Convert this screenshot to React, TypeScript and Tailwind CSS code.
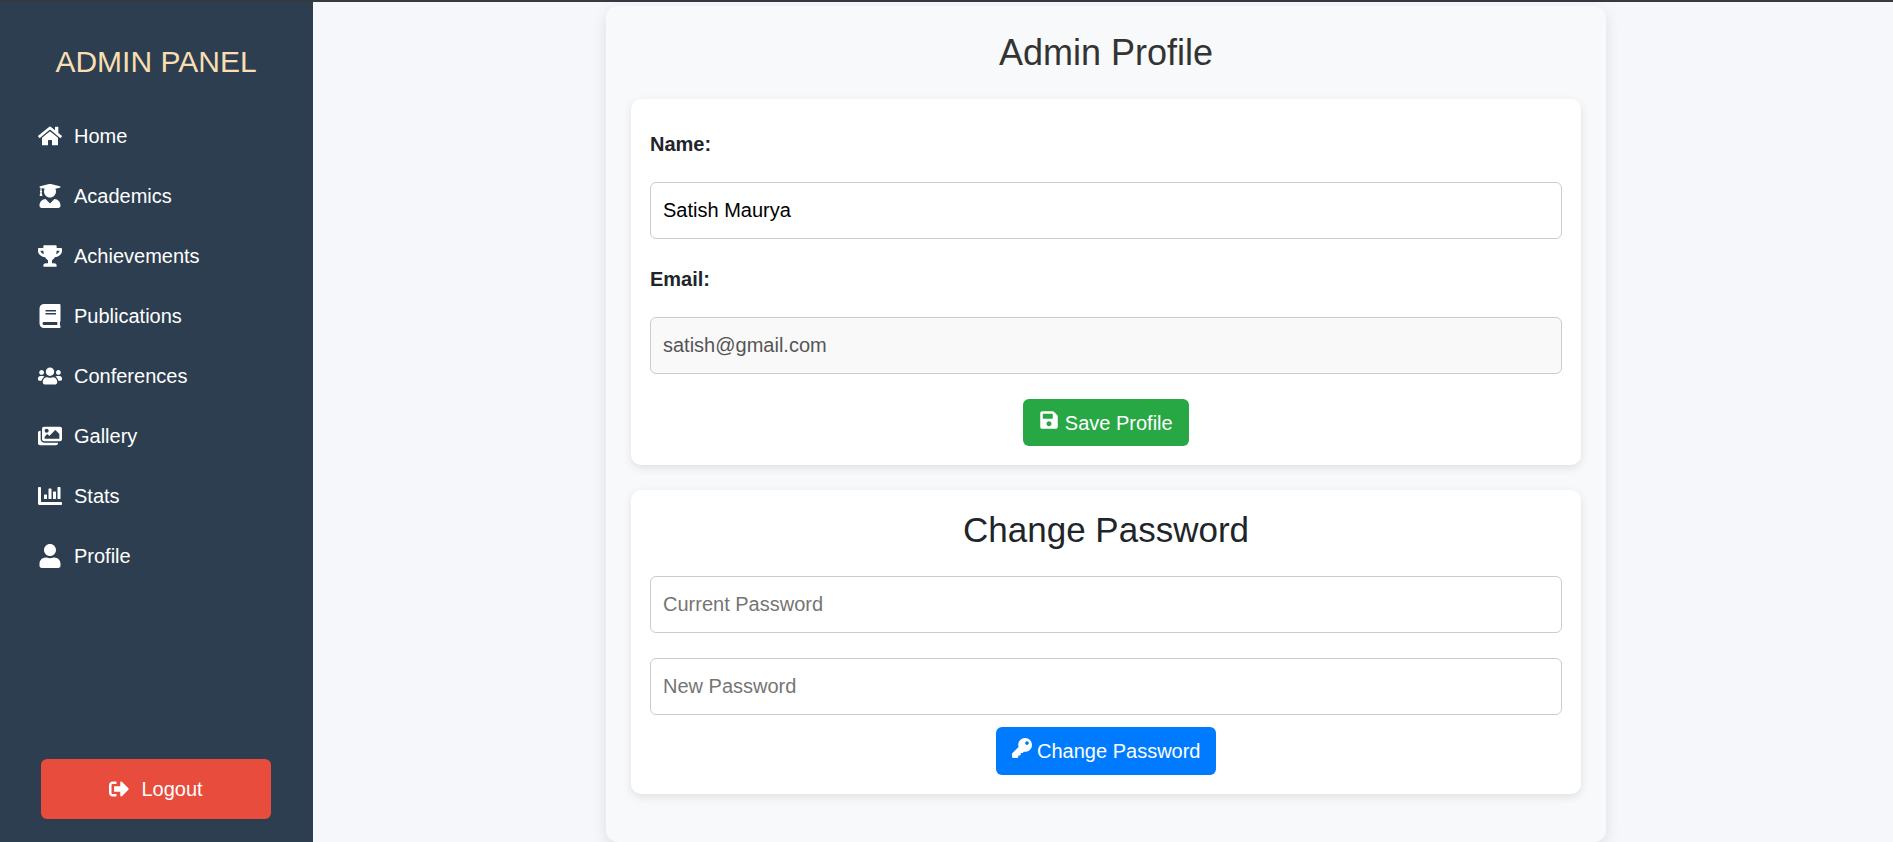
import type { ComponentProps, ReactNode } from "react";
import type { IconType } from "react-icons";
import {
  FaHome,
  FaUserGraduate,
  FaTrophy,
  FaBook,
  FaUsers,
  FaImages,
  FaChartBar,
  FaUser,
  FaSignOutAlt,
  FaSave,
  FaKey,
} from "react-icons/fa";

const links: { label: string; href: string; icon: IconType }[] = [
  { label: "Home", href: "#home", icon: FaHome },
  { label: "Academics", href: "#academics", icon: FaUserGraduate },
  { label: "Achievements", href: "#achievements", icon: FaTrophy },
  { label: "Publications", href: "#publications", icon: FaBook },
  { label: "Conferences", href: "#conferences", icon: FaUsers },
  { label: "Gallery", href: "#gallery", icon: FaImages },
  { label: "Stats", href: "#stats", icon: FaChartBar },
  { label: "Profile", href: "#profile", icon: FaUser },
];

function Sidebar() {
  return (
    <aside className="flex w-[313px] shrink-0 flex-col bg-[#2c3e50] pr-[26px] pl-[25px] pt-[37px] pb-[23px] text-white">
      <h2 className="text-center text-[30px] leading-[46px] text-[#f8deb0]">ADMIN PANEL</h2>
      <nav className="mt-[21px]">
        <ul>
          {links.map(({ label, href, icon: Icon }) => (
            <li key={label}>
              <a href={href} className="flex h-[60px] items-center gap-3 px-[13px]">
                <Icon className="size-6" />
                {label}
              </a>
            </li>
          ))}
        </ul>
      </nav>
      <button
        type="button"
        className="mx-4 mt-auto flex h-[60px] items-center justify-center gap-3 rounded-md bg-[#e74c3c]"
      >
        <FaSignOutAlt className="size-5" />
        Logout
      </button>
    </aside>
  );
}

function Card({ children }: { children: ReactNode }) {
  return (
    <section className="rounded-[10px] bg-white px-[19px] pb-[19px] shadow-[0_3px_10px_rgba(0,0,0,0.1)]">
      {children}
    </section>
  );
}

function TextBox(props: ComponentProps<"input">) {
  return (
    <input
      {...props}
      className="block h-[57px] w-full rounded-md border border-[#ccc] bg-white px-3 text-black placeholder:text-[#757575] disabled:bg-[#f9f9f9] disabled:text-[#555]"
    />
  );
}

export default function App() {
  return (
    <div className="flex min-h-screen flex-col bg-[#f5f7fb] font-['Liberation_Sans',Arial,sans-serif] text-[20px] leading-[30px] text-[#212529]">
      <div className="h-[2px] bg-[#343a40]" />
      <div className="flex flex-1">
        <Sidebar />
        <main className="flex-1 pt-1 pl-[6px]">
          <div className="mx-auto max-w-[1000px] rounded-xl bg-[#f8f9fb] px-[25px] pt-[25px] pb-12 shadow-[0_5px_15px_rgba(0,0,0,0.1)]">
            <h2 className="mb-[25px] text-center text-[36px] leading-[43px] text-[#333]">Admin Profile</h2>
            <div className="flex flex-col gap-[25px]">
              <Card>
                <form className="pt-[30px]">
                  <label htmlFor="name" className="mb-[23px] block font-bold">
                    Name:
                  </label>
                  <TextBox id="name" defaultValue="Satish Maurya" />
                  <label htmlFor="email" className="mt-[25px] mb-[23px] block font-bold">
                    Email:
                  </label>
                  <TextBox id="email" type="email" defaultValue="satish@gmail.com" disabled />
                  <div className="mt-[25px] flex justify-center">
                    <button type="button" className="h-[47px] rounded-md bg-[#28a745] px-4 text-white">
                      <FaSave className="inline align-baseline" /> Save Profile
                    </button>
                  </div>
                </form>
              </Card>
              <Card>
                <form className="pt-[18px]">
                  <h2 className="mb-[25px] text-center text-[35px] leading-[43px]">Change Password</h2>
                  <TextBox type="password" placeholder="Current Password" aria-label="Current Password" />
                  <div className="mt-[25px]">
                    <TextBox type="password" placeholder="New Password" aria-label="New Password" />
                  </div>
                  <div className="mt-3 flex justify-center">
                    <button type="button" className="h-12 rounded-md bg-[#007bff] px-4 text-white">
                      <FaKey className="inline align-baseline" /> Change Password
                    </button>
                  </div>
                </form>
              </Card>
            </div>
          </div>
        </main>
      </div>
    </div>
  );
}
